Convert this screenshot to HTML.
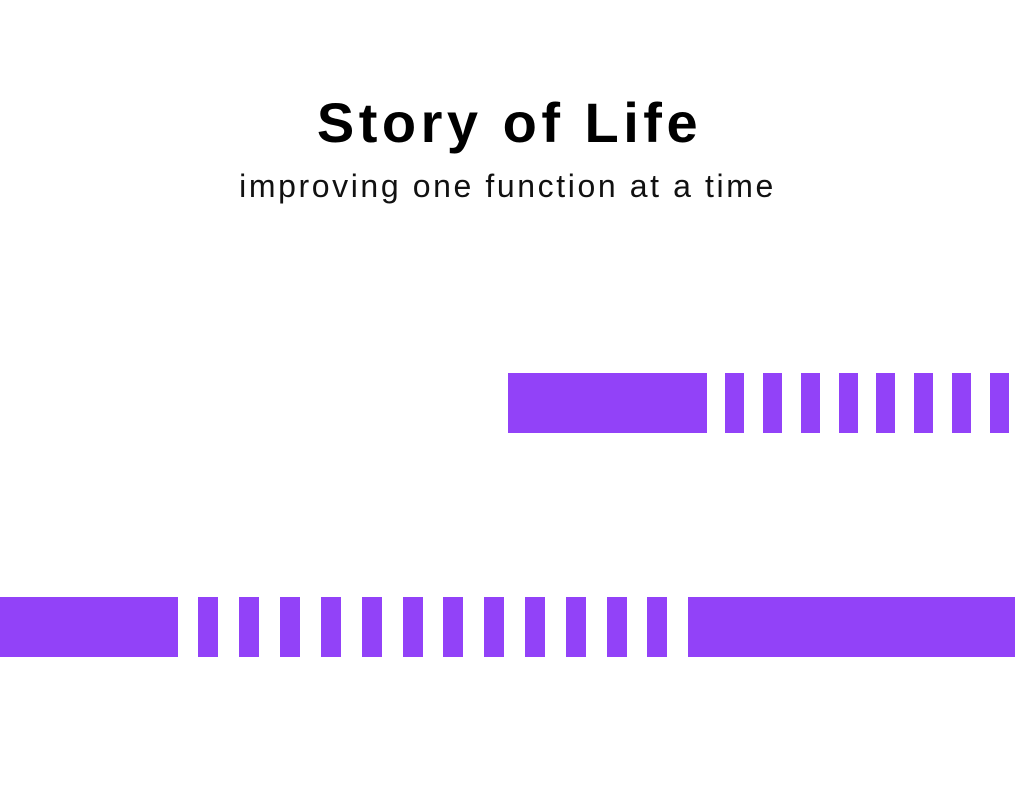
<!DOCTYPE html>
<html><head><style>
body{margin:0;width:1015px;height:793px;background:#fff;position:relative;overflow:hidden;font-family:"Liberation Sans",sans-serif}
.b{position:absolute;background:#9242f8}
h1{position:absolute;top:88px;left:0;width:1015px;text-align:center;margin:0;font-size:56px;font-weight:bold;color:#000;line-height:70px;letter-spacing:4.5px;text-indent:4px}
p{position:absolute;top:166px;left:0;width:1015px;text-align:center;margin:0;font-size:32px;color:#111;line-height:40px;letter-spacing:2.6px}
</style></head><body>
<h1>Story of Life</h1>
<p>improving one function at a time</p>
<div class="b" style="left:508px;top:373px;width:199px;height:60px"></div>
<div class="b" style="left:725px;top:373px;width:19px;height:60px"></div>
<div class="b" style="left:763px;top:373px;width:19px;height:60px"></div>
<div class="b" style="left:801px;top:373px;width:19px;height:60px"></div>
<div class="b" style="left:839px;top:373px;width:19px;height:60px"></div>
<div class="b" style="left:876px;top:373px;width:19px;height:60px"></div>
<div class="b" style="left:914px;top:373px;width:19px;height:60px"></div>
<div class="b" style="left:952px;top:373px;width:19px;height:60px"></div>
<div class="b" style="left:990px;top:373px;width:19px;height:60px"></div>
<div class="b" style="left:0;top:597px;width:178px;height:60px"></div>
<div class="b" style="left:198px;top:597px;width:20px;height:60px"></div>
<div class="b" style="left:239px;top:597px;width:20px;height:60px"></div>
<div class="b" style="left:280px;top:597px;width:20px;height:60px"></div>
<div class="b" style="left:321px;top:597px;width:20px;height:60px"></div>
<div class="b" style="left:362px;top:597px;width:20px;height:60px"></div>
<div class="b" style="left:403px;top:597px;width:20px;height:60px"></div>
<div class="b" style="left:443px;top:597px;width:20px;height:60px"></div>
<div class="b" style="left:484px;top:597px;width:20px;height:60px"></div>
<div class="b" style="left:525px;top:597px;width:20px;height:60px"></div>
<div class="b" style="left:566px;top:597px;width:20px;height:60px"></div>
<div class="b" style="left:607px;top:597px;width:20px;height:60px"></div>
<div class="b" style="left:647px;top:597px;width:20px;height:60px"></div>
<div class="b" style="left:688px;top:597px;width:327px;height:60px"></div>
</body></html>
